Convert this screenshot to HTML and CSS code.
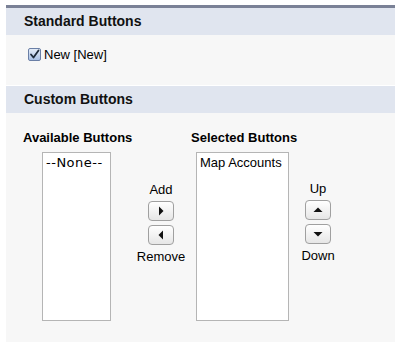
FILE: index.html
```html
<!DOCTYPE html>
<html>
<head>
<meta charset="utf-8">
<link rel="stylesheet" href="styles.css">
</head>
<body>
<div class="panel">
  <div class="section-head">Standard Buttons</div>
  <div class="section-body std">
    <label class="check"><span class="box"><svg width="11" height="11" viewBox="0 0 11 11"><path d="M2 5.5 L4.5 8.5 L9.5 1.5" fill="none" stroke="#1d2a3a" stroke-width="1.8" stroke-linecap="round" stroke-linejoin="round"/></svg></span>New [New]</label>
  </div>
  <div class="section-head">Custom Buttons</div>
  <div class="section-body custom">
    <div class="col avail">
      <div class="col-title">Available Buttons</div>
      <div class="list"><div class="opt none">--None--</div></div>
    </div>
    <div class="ctrl addrem">
      <div class="lbl top">Add</div>
      <div class="btn"><svg width="10" height="12" viewBox="0 0 10 12"><path d="M3 1.5 L7.5 6 L3 10.5 Z" fill="#111"/></svg></div>
      <div class="btn"><svg width="10" height="12" viewBox="0 0 10 12"><path d="M7 1.5 L2.5 6 L7 10.5 Z" fill="#111"/></svg></div>
      <div class="lbl">Remove</div>
    </div>
    <div class="col sel">
      <div class="col-title">Selected Buttons</div>
      <div class="list"><div class="opt">Map Accounts</div></div>
    </div>
    <div class="ctrl updown">
      <div class="lbl top">Up</div>
      <div class="btn"><svg width="12" height="10" viewBox="0 0 12 10"><path d="M1.5 7 L6 2.5 L10.5 7 Z" fill="#111"/></svg></div>
      <div class="btn"><svg width="12" height="10" viewBox="0 0 12 10"><path d="M1.5 3 L6 7.5 L10.5 3 Z" fill="#111"/></svg></div>
      <div class="lbl">Down</div>
    </div>
  </div>
</div>
</body>
</html>
```
FILE: styles.css
```css
html, body { margin: 0; padding: 0; background: #fff; }
body {
  padding: 5px 0 0 6px;
  font-family: "Liberation Sans", Arial, Helvetica, sans-serif;
  color: #000;
}
.panel {
  border-top: 3px solid #7a8196;
  background: #f7f7f7;
  height: 334px;
}
.section-head {
  background: #e0e5ef;
  height: 27px;
  line-height: 27px;
  padding-left: 18px;
  font-weight: bold;
  font-size: 14px;
  color: #111;
}
.section-body.std {
  height: 51px;
  box-sizing: border-box;
  padding: 12px 0 0 22px;
  border-bottom: 1px solid #fff;
}
.check {
  display: flex;
  align-items: center;
  font-size: 13px;
  gap: 3px;
}
.box {
  width: 11px; height: 11px;
  border: 1px solid #6a7fa6;
  border-radius: 2px;
  background: linear-gradient(#e4ecf8, #a9c1e6);
  display: flex; align-items: center; justify-content: center;
}
.section-body.custom {
  display: flex;
  padding: 17px 0 0 17px;
}
.col { display: flex; flex-direction: column; }
.col-title {
  font-weight: bold; font-size: 13px;
  height: 22px; line-height: 16px;
  white-space: nowrap;
}
.list {
  background: #fff;
  border: 1px solid #b5b5b5;
  height: 169px;
  box-sizing: border-box;
  font-size: 13px;
  padding: 2px 3px;
  line-height: 15px;
}
.opt.none { font-family: "DejaVu Sans", sans-serif; font-size: 13px; letter-spacing: 0.5px; }
.avail { width: 88px; }
.avail .list { width: 69px; margin-left: 19px; }
.sel { width: 98px; margin-left: 5px; }
.sel .list { width: 93px; margin-left: 5px; }
.ctrl {
  display: flex; flex-direction: column; align-items: center;
  font-size: 13px;
  padding-top: 52px;
}
.addrem { width: 50px; margin-left: 25px; }
.updown { width: 40px; margin-left: 9px; padding-top: 51px; }
.lbl { line-height: 15px; height: 15px; }
.lbl.top { margin-bottom: 4px; }
.btn {
  width: 26px; height: 20px;
  box-sizing: border-box;
  border: 1px solid #a0a0a0;
  border-radius: 4px;
  background: linear-gradient(#ffffff, #e6e6e6);
  display: flex; align-items: center; justify-content: center;
  margin-bottom: 4px;
}
```
